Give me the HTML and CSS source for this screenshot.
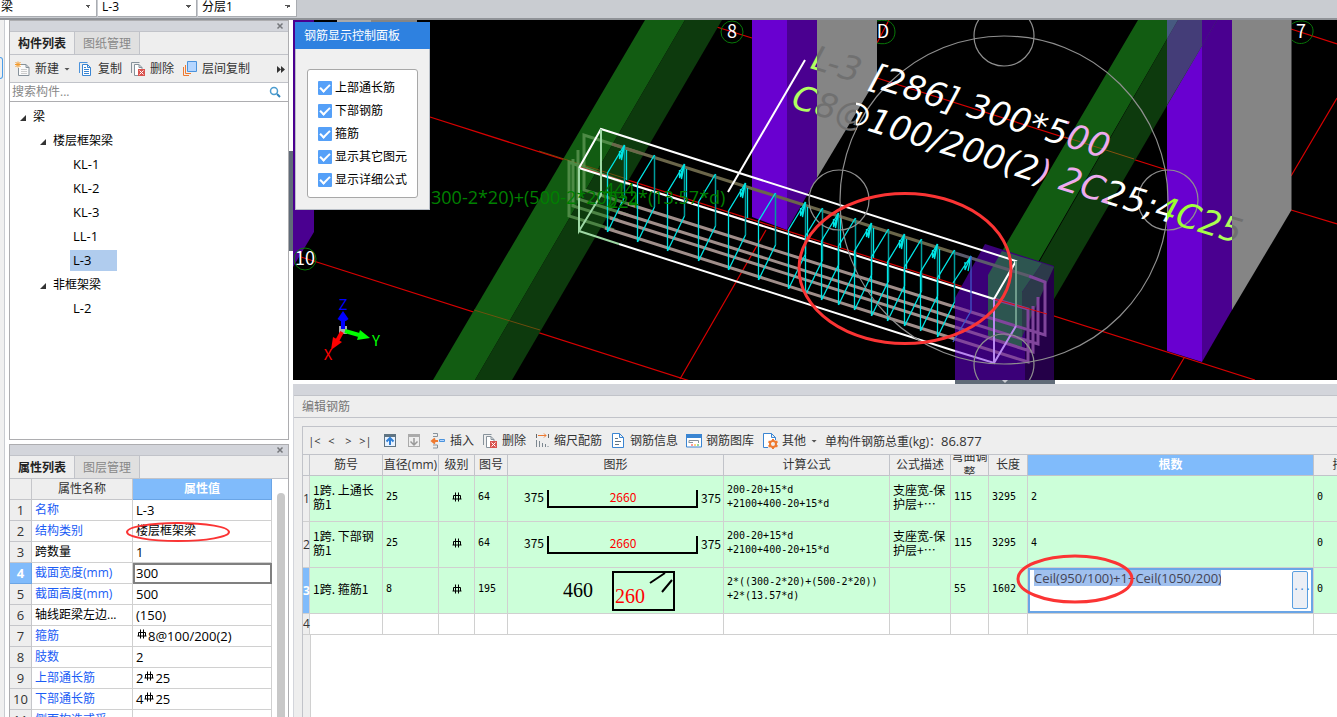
FILE: index.html
```html
<!DOCTYPE html>
<html lang="zh-CN">
<head>
<meta charset="utf-8">
<title>编辑钢筋</title>
<link rel="stylesheet" href="styles.css">
</head>
<body>
<svg class="defs" aria-hidden="true">
  <symbol id="rebar" viewBox="0 0 10 10"><path d="M1.500 7V3.500h7V7M.5 7h9M3.500 .5v9M6.500 .5v9" fill="none" stroke="currentColor"/></symbol>
  <symbol id="close" viewBox="0 0 8 8"><path d="M1.500 1.500l5 5m0-5l-5 5" stroke="#75777b" stroke-width="1.500"/></symbol>
  <symbol id="delete" viewBox="0 0 16 16"><path d="M1.500 12V1.500h8" fill="none" stroke="#87929b"/><path d="M8 14.500H4.500v-11H9l3 3V8M9 3.500v3h3" fill="#fff" stroke="#87929b"/><path fill="#d9534f" d="M8 8h7v7H8z"/><path d="M9.500 9.500l4 4m0-4l-4 4" stroke="#fff"/></symbol>
</svg>

<header class="topbar">
  <select class="pick" aria-label="构件类型"><option>梁</option></select>
  <select class="pick" aria-label="构件"><option>L-3</option></select>
  <select class="pick" aria-label="分层"><option>分层1</option></select>
</header>

<main class="workspace">
  <div class="rail"><span class="rail-tab"></span></div>

  <div class="sidebar">
    <section class="panel tree-panel">
      <div class="grip"><button class="close" aria-label="关闭"><svg><use href="#close"/></svg></button></div>
      <nav class="tabs"><button class="tab active">构件列表</button><button class="tab">图纸管理</button></nav>
      <div class="tools">
        <button class="tool"><svg viewBox="0 0 16 16"><path d="M6 3.500h5l3 3v8H3.500V7M11 3.500v3h3" fill="#fafafa" stroke="#87929b"/><path d="M6 8.500h6M6 10.500h6M6 12.500h6" stroke="#ccc"/><path d="M.5 1l5 5m0-5l-5 5M3 .5v6M0 3.500h6" stroke="#f39a2b"/></svg>新建<i class="caret"></i></button>
        <button class="tool"><svg viewBox="0 0 16 16"><path d="M1.500 12V1.500h8" fill="none" stroke="#4b93dc"/><path d="M4.500 3.500h5l3 3v8h-8zM9.500 3.500v3h3" fill="#fff" stroke="#3a85d2"/><path d="M6 6.500h2M6 8.500h5M6 10.500h5M6 12.500h5" stroke="#3a85d2"/></svg>复制</button>
        <button class="tool"><svg><use href="#delete"/></svg>删除</button>
        <button class="tool"><svg viewBox="0 0 16 16"><path d="M1.500 6v8.500H7M3.500 4v8.500H9" fill="none" stroke="#ee7a31"/><path d="M5.500 .5h9v10h-9z" fill="#b5d6ff" stroke="#4b93dc"/></svg>层间复制</button>
        <button class="more" aria-label="更多"><svg viewBox="0 0 8 7"><path d="M0 0l4 3.500L0 7zM4 0l4 3.500L4 7z" fill="#333"/></svg></button>
      </div>
      <label class="search"><input type="text" placeholder="搜索构件..." aria-label="搜索构件"><svg viewBox="0 0 12 12"><circle cx="5" cy="5" r="3.500" fill="none" stroke="#4b9ccf" stroke-width="1.500"/><path d="M8 8l3 3" stroke="#2f83bb" stroke-width="2"/></svg></label>
      <ul class="tree">
        <li><span class="node"><i class="twist"></i>梁</span>
          <ul>
            <li><span class="node"><i class="twist"></i>楼层框架梁</span>
              <ul>
                <li><span class="leaf">KL-1</span></li>
                <li><span class="leaf">KL-2</span></li>
                <li><span class="leaf">KL-3</span></li>
                <li><span class="leaf">LL-1</span></li>
                <li><span class="leaf selected">L-3</span></li>
              </ul>
            </li>
            <li><span class="node"><i class="twist"></i>非框架梁</span>
              <ul><li><span class="leaf">L-2</span></li></ul>
            </li>
          </ul>
        </li>
      </ul>
    </section>

    <section class="panel prop-panel">
      <div class="grip"><button class="close" aria-label="关闭"><svg><use href="#close"/></svg></button></div>
      <nav class="tabs"><button class="tab active">属性列表</button><button class="tab">图层管理</button></nav>
      <div class="prop-body">
        <table class="props">
          <colgroup><col class="p-num"><col class="p-name"><col></colgroup>
          <thead><tr><th></th><th>属性名称</th><th class="on">属性值</th></tr></thead>
          <tbody>
            <tr><th>1</th><td class="link">名称</td><td class="num">L-3</td></tr>
            <tr><th>2</th><td class="link">结构类别</td><td class="marked">楼层框架梁<svg class="ring ring-type" viewBox="0 0 104 22"><ellipse cx="52" cy="11" rx="51" ry="9"/></svg></td></tr>
            <tr><th>3</th><td>跨数量</td><td class="num">1</td></tr>
            <tr><th class="on">4</th><td class="link">截面宽度(mm)</td><td class="num editing">300</td></tr>
            <tr><th>5</th><td class="link">截面高度(mm)</td><td class="num">500</td></tr>
            <tr><th>6</th><td>轴线距梁左边...</td><td class="num">(150)</td></tr>
            <tr><th>7</th><td class="link">箍筋</td><td class="num"><svg class="rebar"><use href="#rebar"/></svg>8@100/200(2)</td></tr>
            <tr><th>8</th><td class="link">肢数</td><td class="num">2</td></tr>
            <tr><th>9</th><td class="link">上部通长筋</td><td class="num">2<svg class="rebar"><use href="#rebar"/></svg>25</td></tr>
            <tr><th>10</th><td class="link">下部通长筋</td><td class="num">4<svg class="rebar"><use href="#rebar"/></svg>25</td></tr>
            <tr><th>11</th><td class="link">侧面构造或受...</td><td></td></tr>
          </tbody>
        </table>
        <div class="scroll"></div>
      </div>
    </section>
  </div>

  <div class="gutter"><span class="handle"></span></div>

  <div class="content">
    <section class="scene">
      <svg class="view" viewBox="293 20 1044 360" preserveAspectRatio="xMinYMin slice">
        <defs>
          <linearGradient id="ink1" gradientUnits="userSpaceOnUse" x1="800" x2="1300" y1="0" y2="0" gradientTransform="rotate(-17 812 69)">
            <stop offset=".034" stop-color="#b0ff60"/><stop offset=".034" stop-color="#707070"/><stop offset=".13" stop-color="#707070"/><stop offset=".13" stop-color="#fff"/><stop offset=".534" stop-color="#fff"/><stop offset=".534" stop-color="#eeaaee"/>
          </linearGradient>
          <linearGradient id="ink2" gradientUnits="userSpaceOnUse" x1="700" x2="1300" y1="0" y2="0" gradientTransform="rotate(-17 790 107)">
            <stop offset=".195" stop-color="#b0ff60"/><stop offset=".195" stop-color="#707070"/><stop offset=".26" stop-color="#707070"/><stop offset=".26" stop-color="#fff"/><stop offset=".565" stop-color="#fff"/><stop offset=".565" stop-color="#eeaaee"/><stop offset=".68" stop-color="#eeaaee"/><stop offset=".68" stop-color="#fff"/><stop offset=".778" stop-color="#fff"/><stop offset=".778" stop-color="#96ff28"/><stop offset=".886" stop-color="#b0ff60"/><stop offset=".886" stop-color="#707070"/>
          </linearGradient>
          <g id="stirrup"><path d="M624.500 145v52" stroke="#009c9c" stroke-width="1.500"/><path d="M607.500 232v-59l17-28"/><path d="M607.500 232l17-35"/></g>
          <g id="hooked"><use href="#stirrup"/><path d="M624.500 145l-5 14v-8m5-6l-3 15v-8"/><path d="M626.500 150v30"/></g>
        </defs>
        <rect x="293" y="20" width="1044" height="360"/>

        <path fill="#aaa" d="M337 20h34v2h-34z"/><path fill="#858585" d="M371 20h46v2h-46z"/>
        <path fill="#4a0090" d="M293 20h21v212l-21 35z"/>

        <g fill="none" stroke="#d80000" stroke-width="1.200">
          <path d="M430 117L1255 380M301 257L712 388M694 20l58 18M766 230L680 379M1171 380l13-22M877 78l290 92M1337 98l-46 78M1291 210l46 14M1291 29l46 15M877 43l12-23"/>
        </g>

        <path fill="#125c12" d="M645 20h40L475 380h-42z"/>
        <path fill="#0d3a0d" d="M685 20h37L512 380h-37z"/>
        <path d="M474 310l66 20M539 151l88 28" stroke="#85500f" opacity=".8"/>

        <path fill="#6900d0" d="M752 20h35v210l-35-13z"/>
        <path fill="#4a0090" d="M787 20h30v158l-30 52z"/>
        <path fill="#858585" d="M817 20h60v58l-60 100z"/>

        <path fill="#6900d0" d="M1167 20h35v342l-35-11z"/>
        <path fill="#4a0090" d="M1202 20h30v290l-30 52z"/>
        <path fill="#858585" d="M1232 20h59.500v190L1232 310z"/>

        <path fill="#125c12" d="M1138 20h40L1022 290v58l-34-11v-62z"/>
        <path fill="#0d3a0d" d="M1178 20h39L1022 354v-62z"/>
        <path fill="#465a80" d="M1167 20h11l-11 19z"/>
        <path fill="#443d78" d="M1178 20h39l-15 26-35 59V39z"/>
        <path fill="#4a0090" d="M1202 20h15l-15 26z"/>
        <path d="M1065 137l69 22" stroke="#85500f"/>

        <g fill="none" stroke-width="3">
          <g stroke="#5d9653" opacity=".8"><path d="M640 153l-56-18v55l48 15M578 150v49l50 16M573 159v47l45 14M628 184l-59-22v54l45 14"/></g>
          <path stroke="#6b664a" d="M612 144l343 109"/>
          <path stroke="#a08e8a" d="M628 204l327 103M618 212l337 106M610 218l345 109M605 228l350 111"/>
        </g>

        <path fill="#3a0078" d="M955 298l30-54 69 22v114h-99z"/>
        <path fill="#240048" d="M1025 318l29-52v114h-29z"/>
        <path fill="#2d5550" d="M988 275l14-24 40 12-20 29v56l-34-11z"/>
        <path fill="#2c3a4a" d="M1042 263l12 4-32 70v-45z"/>

        <g fill="none" stroke="#80459b" stroke-width="3">
          <path d="M955 253l74 23" stroke="#5c5b6b"/>
          <path d="M1029 276l16 6v53l-90-28M1038 297v47l-83-26M1033 306v46l-78-25M994 299l34 10v53l-73-23"/>
        </g>

        <path d="M579 167L994 299l53 15" stroke="#d81010" fill="none"/>
        <g fill="none" stroke="#fff" stroke-width="2">
          <path d="M579 168l22-39 415 132-22 38-415-131M619 244l336 107"/>
          <path stroke="#9ed8a4" d="M601 129v66l-22 36v-63M579 231l40 13"/>
          <path stroke="#6f9c8c" d="M1016 261v65"/>
          <path stroke="#b989f0" d="M955 351l39 12v-64M994 363l22-37"/>
          <path d="M805 60l-77 132"/>
        </g>

        <g fill="none" stroke="#00e5e5" stroke-width="1.300">
          <use href="#hooked"/>
          <use href="#stirrup" x="30" y="10"/>
          <use href="#hooked" x="60" y="19"/>
          <use href="#stirrup" x="91" y="29"/>
          <use href="#hooked" x="121" y="38"/>
          <use href="#stirrup" x="151" y="48"/>
          <use href="#hooked" x="181" y="57"/>
          <use href="#stirrup" x="198" y="63"/>
          <use href="#hooked" x="214" y="68"/>
          <use href="#stirrup" x="231" y="73"/>
          <use href="#hooked" x="247" y="78"/>
          <use href="#stirrup" x="264" y="84"/>
          <use href="#hooked" x="280" y="89"/>
          <use href="#stirrup" x="297" y="94"/>
          <use href="#hooked" x="313" y="99"/>
          <use href="#stirrup" x="330" y="105"/>
          <path d="M953 283l18-27-6 14v-8m6-6l-3 15"/>
          <path d="M971 256v55l-18 31" stroke="#3f55c8"/>
        </g>

        <g class="formula"><text x="431" y="204">300-2*20)+(500-2*20))+2*(13.57*d)</text><text x="604" y="196">444</text><text x="608" y="208">224</text></g>

        <g fill="none" stroke="#8f8f8f" stroke-width="1.200">
          <circle cx="1004" cy="200" r="164"/><circle cx="1004" cy="36" r="30"/><circle cx="839" cy="200" r="30"/><circle cx="1168" cy="200" r="30"/><circle cx="1004" cy="364" r="30"/>
        </g>

        <g class="note">
          <text x="809" y="69" transform="rotate(17 812 69)" fill="url(#ink1)">L-3 [286] 300*500</text>
          <text x="790" y="107" transform="rotate(17 790 107)" fill="url(#ink2)">C8@100/200(2) 2C25;4C25</text>
        </g>

        <g fill="none" stroke="#087808">
          <circle cx="732" cy="32" r="11"/><path d="M877 21c12-3 18 3 18 11s-7 14-18 11"/><path d="M1292 24c8-6 22-3 21 8s-14 15-21 8"/><circle cx="305" cy="259" r="11"/>
        </g>
        <g class="axis"><text x="732" y="38">8</text><text x="883" y="38">D</text><text x="1301" y="38">7</text><text x="305" y="265">10</text></g>

        <g>
          <path d="M339 326h8v8h-8z" fill="#aaa"/>
          <path d="M343 329v-12" stroke="#00f" stroke-width="4"/><path d="M337.500 319l5.500-8 5.500 8q-5 5-11 0z" fill="#00f"/>
          <path d="M345 331l14 4" stroke="#0f0" stroke-width="4"/><path d="M360 330l10 8-13 2z" fill="#0f0"/>
          <path d="M342 332l-5 9" stroke="#f00" stroke-width="4"/><path d="M333 337l9 5-11 8z" fill="#f00"/>
          <g class="gizmo"><text x="343" y="310" fill="#00f">Z</text><text x="376" y="346" fill="#0f0">Y</text><text x="328" y="360" fill="#f00">X</text></g>
        </g>

        <ellipse cx="905" cy="268.500" rx="106" ry="75" fill="none" stroke="#fb3434" stroke-width="3"/>
      </svg>

      <aside class="control">
        <h2>钢筋显示控制面板</h2>
        <div class="control-box">
          <label><input type="checkbox" checked>上部通长筋</label>
          <label><input type="checkbox" checked>下部钢筋</label>
          <label><input type="checkbox" checked>箍筋</label>
          <label><input type="checkbox" checked>显示其它图元</label>
          <label><input type="checkbox" checked>显示详细公式</label>
        </div>
      </aside>
    </section>

    <div class="splitter"><span class="split-handle"><i class="notch"></i></span></div>

    <section class="editor">
      <div class="grip"></div>
      <h2 class="editor-title">编辑钢筋</h2>
      <div class="sheet">
        <div class="tools">
          <div class="steps"><button>|&lt;</button><button>&lt;</button><button>&gt;</button><button>&gt;|</button></div>
          <button class="tool" aria-label="上移"><svg viewBox="0 0 16 16"><path fill="#607482" d="M2 1h12v13H2z"/><path fill="#e9f3ff" d="M3 4h10v9H3z"/><path d="M8 12V6M4.500 8.500L8 5l3.500 3.500" fill="none" stroke="#2f7fd6" stroke-width="2"/></svg></button>
          <button class="tool" aria-label="下移"><svg viewBox="0 0 16 16"><path fill="#aaa" d="M2 1h12v13H2z"/><path fill="#eee" d="M3 4h10v9H3z"/><path d="M8 5v6M4.500 8.500L8 12l3.500-3.500" fill="none" stroke="#999" stroke-width="1.500"/></svg></button>
          <button class="tool"><svg viewBox="0 0 16 16"><path d="M3 .5h4.500v3H3M3 12h4.500v3H3" fill="none" stroke="#87929b"/><path d="M2 8h6M5 5.500L2 8l3 2.500" fill="none" stroke="#ee7a31" stroke-width="2"/><path d="M9.500 6.500h5v2h-5z" fill="#b5d6ff" stroke="#4b93dc"/></svg>插入</button>
          <button class="tool"><svg><use href="#delete"/></svg>删除</button>
          <button class="tool"><svg viewBox="0 0 16 16"><path d="M2.500 1v4M14.500 1v4" stroke="#666"/><path d="M4 2.500h8M10 .5l2 2-2 2" fill="none" stroke="#ee7a31"/><path d="M2.500 7v7M5.500 8v6M8.500 10v4M11.500 11v3M14 13v1" stroke="#7c8790"/></svg>缩尺配筋</button>
          <button class="tool"><svg viewBox="0 0 16 16"><path d="M2.500 .5h7l4 4v10h-11zM9.500 .5v4h4" fill="#fff" stroke="#3a85d2"/><path d="M5 5.500h3M5 8.500h6M5 11.500h4" stroke="#607482"/></svg>钢筋信息</button>
          <button class="tool"><svg viewBox="0 0 16 16"><path d="M.5 2h15v12H.5z" fill="#fff" stroke="#3a85d2"/><path d="M0 1h16v4H0z" fill="#3a85d2"/><path d="M3 10V7.500h9.500V10M3 9.500h4" fill="none" stroke="#87929b"/><path d="M5 12h2" stroke="#f33"/><path d="M8 12h2" stroke="#fa0"/><path d="M11 12h2" stroke="#3b3"/></svg>钢筋图库</button>
          <button class="tool"><svg viewBox="0 0 16 16"><path d="M6 14.500H1.500V.5h8l4 4V7M9.500 .5v4h4" fill="#fff" stroke="#3a85d2"/><circle cx="11" cy="11" r="3" fill="none" stroke="#ee7a31" stroke-width="2"/><path d="M11 6v2m0 6v2M6.500 8.500l2 1m5 3l2 1m0-5l-2 1m-5 3l-2 1" stroke="#ee7a31" stroke-width="2"/></svg>其他<i class="caret"></i></button>
          <span>单构件钢筋总重(kg)：<span class="num">86.877</span></span>
        </div>
        <table class="bars">
          <colgroup><col class="b-row"><col class="b-id"><col class="b-dia"><col class="b-grade"><col class="b-no"><col class="b-shape"><col class="b-calc"><col class="b-desc"><col class="b-bend"><col class="b-len"><col><col class="b-lap"></colgroup>
          <thead><tr><th></th><th>筋号</th><th>直径(mm)</th><th>级别</th><th>图号</th><th>图形</th><th>计算公式</th><th>公式描述</th><th><div class="wrap">弯曲调整</div></th><th>长度</th><th class="on">根数</th><th>搭接</th></tr></thead>
          <tbody>
            <tr><th>1</th><td class="zh">1跨. 上通长<br>筋1</td><td>25</td><td class="mid"><svg class="rebar"><use href="#rebar"/></svg></td><td>64</td>
              <td class="shape"><svg viewBox="0 0 215 45"><path d="M40 14v17h149V14" fill="none" stroke="#000" stroke-width="2"/><g class="dims"><text x="26" y="26">375</text><text x="115" y="26" fill="red">2660</text><text x="203" y="27">375</text></g></svg></td>
              <td>200-20+15*d<br>+2100+400-20+15*d</td><td class="zh">支座宽-保<br>护层+…</td><td>115</td><td>3295</td><td>2</td><td>0</td></tr>
            <tr><th>2</th><td class="zh">1跨. 下部钢<br>筋1</td><td>25</td><td class="mid"><svg class="rebar"><use href="#rebar"/></svg></td><td>64</td>
              <td class="shape"><svg viewBox="0 0 215 45"><path d="M40 14v17h149V14" fill="none" stroke="#000" stroke-width="2"/><g class="dims"><text x="26" y="26">375</text><text x="115" y="26" fill="red">2660</text><text x="203" y="27">375</text></g></svg></td>
              <td>200-20+15*d<br>+2100+400-20+15*d</td><td class="zh">支座宽-保<br>护层+…</td><td>115</td><td>3295</td><td>4</td><td>0</td></tr>
            <tr><th class="on">3</th><td class="zh">1跨. 箍筋1</td><td>8</td><td class="mid"><svg class="rebar"><use href="#rebar"/></svg></td><td>195</td>
              <td class="shape"><svg viewBox="0 0 215 45"><path d="M105 4h61v38h-61zM142 15l15-10M154 24l10-12" fill="none" stroke="#000" stroke-width="2"/><g class="dims big"><text x="70" y="29">460</text><text x="122" y="35" fill="red">260</text></g></svg></td>
              <td>2*((300-2*20)+(500-2*20))<br>+2*(13.57*d)</td><td></td><td>55</td><td>1602</td>
              <td class="count"><div class="field"><input type="text" value="Ceil(950/100)+1+Ceil(1050/200)" aria-label="根数"><button aria-label="更多">···</button></div><svg class="ring ring-count" viewBox="0 0 118 50"><ellipse cx="59" cy="25" rx="57" ry="23"/></svg></td><td>0</td></tr>
            <tr class="blank"><th>4</th><td></td><td></td><td></td><td></td><td></td><td></td><td></td><td></td><td></td><td></td><td></td></tr>
          </tbody>
        </table>
        <div class="rest"></div>
      </div>
    </section>
  </div>
</main>
</body>
</html>
```
FILE: styles.css
```css
* { box-sizing: border-box; }
body {
  margin: 0;
  height: 100vh;
  display: flex;
  flex-direction: column;
  overflow: hidden;
  font: 12px/16px "Open Sans", "Noto Sans CJK SC", sans-serif;
  color: #333;
  background: #fff;
}
button, input, select { font: inherit; color: inherit; }
button { border: 0; padding: 0; background: none; }
h2 { margin: 0; font-size: 12px; font-weight: 400; }
ul { list-style: none; margin: 0; padding: 0; }
table { border-collapse: separate; border-spacing: 0; table-layout: fixed; }
.defs { position: absolute; width: 0; height: 0; }
.num { font-size: 13px; }

.topbar {
  flex: 0 0 20px;
  display: flex;
  align-items: flex-start;
  gap: 1px;
  background: #c9ccd1;
  border-bottom: 2px solid #909398;
}
.pick {
  appearance: none;
  width: 99px;
  height: 17px;
  padding: 0 0 2px 4px;
  line-height: 14px;
  border: solid #a9acb1;
  border-width: 0 1px 1px 0;
  border-radius: 0;
  color: #000;
  background: conic-gradient(from 315deg at 50% 100%, #555 90deg, transparent 0) 87px 5px / 6px 3px no-repeat, #fff;
}
.pick:first-child { width: 97px; padding-left: 1px; background-position: 85px 5px, 0 0; }

.workspace { flex: 1; min-height: 0; display: flex; }
.rail { flex: 0 0 5px; background: #f0f0f0; border-right: 1px solid #c9ccd1; padding-top: 37px; }
.rail-tab { display: block; width: 3px; height: 22px; border: 1px solid #4b9de8; border-left: 0; border-radius: 0 3px 3px 0; }
.sidebar { flex: 0 0 280px; margin-left: 4px; display: flex; flex-direction: column; gap: 4px; }
.panel { display: flex; flex-direction: column; border: 1px solid #adadb0; background: #fff; }
.tree-panel { flex: 1; min-height: 0; }
.prop-panel { flex: 0 0 273px; border-bottom: 0; overflow: hidden; }
.grip { flex: 0 0 12px; display: flex; justify-content: flex-end; align-items: center; background: #d3d5db; border-bottom: 1px solid #c1c3c9; }
.panel .grip { flex-basis: 11px; }
.close { margin-right: 4px; height: 8px; }
.close svg { display: block; width: 8px; height: 8px; }
.tabs { flex: 0 0 23px; display: flex; background: #eee; border-bottom: 1px solid #c1c3c9; }
.tab { width: 65px; padding-top: 1px; color: #888; background: #e0e0e0; border-right: 1px solid #c1c3c9; }
.tab.active { color: #222; font-weight: 700; background: #eee; }
.tools { flex: 0 0 28px; display: flex; align-items: center; gap: 8px; padding: 1px 3px 0 5px; background: #eee; border-bottom: 1px solid #c1c3c9; white-space: nowrap; }
.tool { display: flex; align-items: center; gap: 4px; }
.tool svg { width: 16px; height: 16px; }
.caret { width: 6px; height: 3px; margin-left: 1px; background: #555; clip-path: polygon(0 0, 100% 0, 50% 100%); }
.more { margin-left: auto; }
.more svg { display: block; width: 8px; height: 7px; }
.search { flex: 0 0 19px; display: flex; align-items: center; padding: 0 7px 0 2px; border-bottom: 1px solid #adadb0; }
.search input { flex: 1; min-width: 0; border: 0; padding: 0; outline: 0; background: none; }
.search input::placeholder { color: #888; }
.search svg { width: 12px; height: 12px; }

.tree { padding: 3px 0 0 9px; color: #000; }
.tree ul { padding-left: 20px; }
.node { display: flex; align-items: center; height: 24px; }
.twist { width: 6px; height: 6px; margin: 2px 7px 0 1px; background: #333; clip-path: polygon(100% 0, 100% 100%, 0 100%); }
.leaf { display: inline-block; height: 21px; margin: 1px 0 0 11px; padding: 0 3px; line-height: 21px; font-size: 13px; vertical-align: top; }
.tree li { min-height: 24px; }
.leaf.selected { background: #b0ccee; width: 47px; }

.prop-body { flex: 1; min-height: 0; display: flex; justify-content: space-between; }
.props { width: 262px; }
.p-num { width: 22px; }
.p-name { width: 101px; }
.props th, .props td { height: 21px; padding: 0; border-right: 1px solid #d0d0d0; border-bottom: 1px solid #d0d0d0; white-space: nowrap; line-height: 16px; }
.props th { font-weight: 400; background: #eee; color: #333; border-color: #c5c6ca; }
.props tbody th { font-size: 13px; }
.props td { padding: 0 3px; color: #000; }
.props td.link { color: #1a5cf5; }
th.on, .props th.on { background: #80bbfb; color: #fff; font-weight: 700; border-color: #6aa5e6; }
.props .editing { outline: 2px solid #808080; outline-offset: -2px; }
.marked, .count { position: relative; }
.rebar { width: 10px; height: 10px; margin: 0 1px; color: #000; }
.props .rebar { vertical-align: 2px; }
.ring { position: absolute; overflow: visible; fill: none; stroke: #fb3434; stroke-width: 2; pointer-events: none; }
.ring-type { left: -7px; top: 0; width: 104px; height: 22px; z-index: 2; }
.ring-count { left: -12px; top: -14px; width: 118px; height: 50px; stroke-width: 3; z-index: 2; }
.scroll { width: 8px; margin: 14px 3px 0 0; border-radius: 4px 4px 0 0; background: #c8c8c8; }

.gutter { flex: 0 0 4px; padding-top: 131px; }
.handle { display: block; height: 100px; background: #606b78; }
.content { flex: 1; min-width: 0; display: flex; flex-direction: column; }
.scene { flex: 1; min-height: 0; position: relative; overflow: hidden; background: #000; }
.view { display: block; width: 100%; height: 100%; }
.formula { font: 18px "Open Sans", sans-serif; fill: #008000; }
.note { font: italic 34px "DejaVu Sans", sans-serif; }
.axis { font: 18px "Noto Sans CJK SC", sans-serif; fill: #fff; text-anchor: middle; }
.gizmo { font: 15px "Noto Sans CJK SC", sans-serif; text-anchor: middle; }
.control { position: absolute; left: 2px; top: 2px; width: 135px; background: #f0f0f0; border: 1px solid #b9bfc7; border-top: 0; color: #000; }
.control h2 { margin: 0 -1px; padding: 6px 9px 5px; background: #2e81e0; color: #fff; }
.control-box { margin: 20px 11px 11px; padding: 6px 10px; border: 1px solid #a8a8a8; border-radius: 3px; background: #fff; }
.control label { display: flex; align-items: center; gap: 3px; height: 23px; white-space: nowrap; }
.control input { appearance: none; flex: none; width: 14px; height: 14px; margin: 0; border-radius: 1px; background: #55a0f8; display: grid; place-items: center; }
.control input:checked::after { content: ""; width: 8px; height: 4px; margin-bottom: 2px; border: solid #fff; border-width: 0 0 2px 2px; rotate: -45deg; }

.splitter { flex: 0 0 4px; display: flex; justify-content: center; }
.split-handle { width: 100px; margin-left: 380px; background: #606b78; }
.notch { display: block; width: 6px; height: 3px; margin: 0 auto; background: #c9ccd1; clip-path: polygon(0 0, 100% 0, 50% 100%); }
.editor { flex: 0 0 333px; display: flex; flex-direction: column; background: #eee; border-left: 1px solid #d3d5db; overflow: hidden; }
.editor-title { flex: 0 0 22px; padding: 3px 8px 2px; color: #777; border-bottom: 1px solid #c1c3c9; }
.sheet { flex: 1; margin: 8px 0 0 8px; display: flex; flex-direction: column; border: solid #c1c3c9; border-width: 1px 0 0 1px; min-height: 0; overflow: hidden; }
.sheet .tools { padding-left: 3px; }
.steps { display: flex; }
.steps button { width: 17px; font-size: 11px; }
.bars { width: calc(100% + 39px); flex: none; color: #000; }
.b-row { width: 7px; }
.b-id { width: 73px; }
.b-dia { width: 56px; }
.b-grade { width: 36px; }
.b-no { width: 33px; }
.b-shape { width: 216px; }
.b-calc { width: 166px; }
.b-desc { width: 61px; }
.b-bend { width: 38px; }
.b-len { width: 39px; }
.b-lap { width: 62px; }
.bars th, .bars td { padding: 0; border-right: 1px solid #d0d0d0; border-bottom: 1px solid #d0d0d0; }
.bars th { font-weight: 400; color: #333; background: #eee; white-space: nowrap; }
.bars th.on { background: #80bbfb; color: #fff; font-weight: 700; }
.bars thead th { height: 21px; border-color: #c1c3c9; }
.wrap { height: 20px; display: flex; align-items: center; text-align: center; white-space: normal; overflow: hidden; }
.bars td { height: 46px; padding: 0 0 3px 3px; background: #ccffd9; font: 10px/14px "DejaVu Sans Mono", monospace; white-space: nowrap; }
.bars td.zh { font: 12px/14px "Noto Sans CJK SC", sans-serif; }
.bars td.mid { padding: 0; text-align: center; }
.bars td.shape, .bars td.count { padding: 0; }
.bars .blank td { height: 21px; background: #fff; }
.shape svg { display: block; width: 100%; height: 45px; }
.dims { font: 12px "Noto Sans CJK SC", sans-serif; text-anchor: middle; }
.dims.big { font: 20px "Liberation Serif", serif; }
.field { height: 45px; display: flex; justify-content: space-between; align-items: flex-start; border: 2px solid #6aa5e6; background: #fff; }
.field input { width: 187px; height: 16px; margin-left: 4px; padding: 0; border: 0; outline: 0; font: 13px/16px "Open Sans", sans-serif; color: #445; background: #a0c0ee; }
.field button { width: 16px; height: 38px; margin: 1px 3px 0 0; border: 1px solid #5a9fe0; border-radius: 2px; background: #eceff5; color: #2f7fd6; }
.rest { flex: 1; margin-left: 7px; background: #fff; border-left: 1px solid #d0d0d0; }
```
